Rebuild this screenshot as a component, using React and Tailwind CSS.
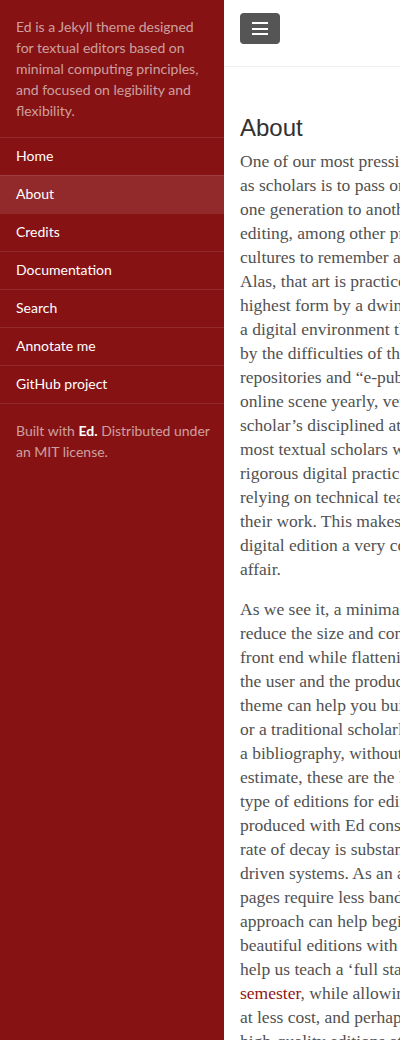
import React from "react";

const navItems = [
    { label: "Home" },
    { label: "About", active: true },
    { label: "Credits" },
    { label: "Documentation" },
    { label: "Search" },
    { label: "Annotate me" },
    { label: "GitHub project" },
]

const firstParagraph = [
    "One of our most pressing and persistent tasks",
    "as scholars is to pass on the knowledge of our",
    "one generation to another. The art of textual",
    "editing, among other practices, is what allows",
    "cultures to remember and recall their pasts.",
    "Alas, that art is practiced in its",
    "highest form by a dwindling number of scholars",
    "a digital environment that is increasingly",
    "by the difficulties of the medium. Institutional",
    "repositories and \u201ce-publishing\u201d tools enter the",
    "online scene yearly, very few of which hold the",
    "scholar\u2019s disciplined attention long enough. So",
    "most textual scholars who wish to engage in",
    "rigorous digital practice find themselves",
    "relying on technical teams to build and sustain",
    "their work. This makes the production of a",
    "digital edition a very costly and time-consuming",
    "affair.",
]

const secondParagraph = [
    "As we see it, a minimal edition is one that seeks to",
    "reduce the size and complexity of the edition\u2019s",
    "front end while flattening the distance between",
    "the user and the producer of the edition. Our",
    "theme can help you build a minimal edition",
    "or a traditional scholarly edition that includes",
    "a bibliography, without a database. By our",
    "estimate, these are the least vulnerable",
    "type of editions for editors to produce. Editions",
    "produced with Ed consist of static pages, whose",
    "rate of decay is substantially slower than database-",
    "driven systems. As an added bonus, static",
    "pages require less bandwidth to load. Our",
    "approach can help beginners create simple yet",
    "beautiful editions with relative ease. Ed can also",
    "help us teach a \u2018full stack\u2019 of minimal computing in one",
    null,
    "at less cost, and perhaps more importantly,",
    "high-quality editions at a reasonable pace.",
]

const Sidebar = () => {
    return (
        <aside className="w-[224px] shrink-0 bg-[#861213] font-['Lato',sans-serif] text-[14px] leading-[21px] text-white/60">
            <div className="p-4 whitespace-nowrap">
                Ed is a Jekyll theme designed<br />
                for textual editors based on<br />
                minimal computing principles,<br />
                and focused on legibility and<br />
                flexibility.
            </div>
            <nav className="border-b border-white/10">
                {navItems.map((item) => (
                    <a
                        key={item.label}
                        href="#"
                        className={"block border-t border-white/10 px-4 pt-[7px] pb-[9px] text-white " + (item.active ? "bg-white/10" : "")}
                    >
                        {item.label}
                    </a>
                ))}
            </nav>
            <div className="p-4 whitespace-nowrap">
                Built with <span className="font-bold text-white">Ed.</span> Distributed under<br />
                an MIT license.
            </div>
        </aside>
    )
}

const Lines = ({ lines }) => {
    return (
        <p className="mb-4 whitespace-nowrap">
            {lines.map((line, index) => (
                <span key={index} className="block">
                    {line === null
                        ? <><a href="#" className="text-[#8f1516]">semester</a>, while allowing scholars to produce editions</>
                        : line}
                </span>
            ))}
        </p>
    )
}

const App = () => {
    return (
        <div className="flex h-[1040px] w-[400px] overflow-hidden bg-white">
            <Sidebar />
            <div className="w-[400px] shrink-0">
                <header className="h-[67px] border-b border-[#eee] px-4 pt-[13px]">
                    <button className="flex h-[31px] w-10 flex-col items-center justify-center gap-[3.5px] rounded bg-[#555]">
                        <span className="block h-[2px] w-4 bg-white"></span>
                        <span className="block h-[2px] w-4 bg-white"></span>
                        <span className="block h-[2px] w-4 bg-white"></span>
                    </button>
                </header>
                <main className="px-4">
                    <h1 className="mt-[46px] font-['Liberation_Sans',Arial,sans-serif] text-[24px] leading-[30px] font-normal text-[#313131]">About</h1>
                    <div className="mt-[6px] font-['Liberation_Serif',serif] text-[17.5px] leading-6 text-[#515151]">
                        <Lines lines={firstParagraph} />
                        <Lines lines={secondParagraph} />
                    </div>
                </main>
            </div>
        </div>
    )
}

export default App;
